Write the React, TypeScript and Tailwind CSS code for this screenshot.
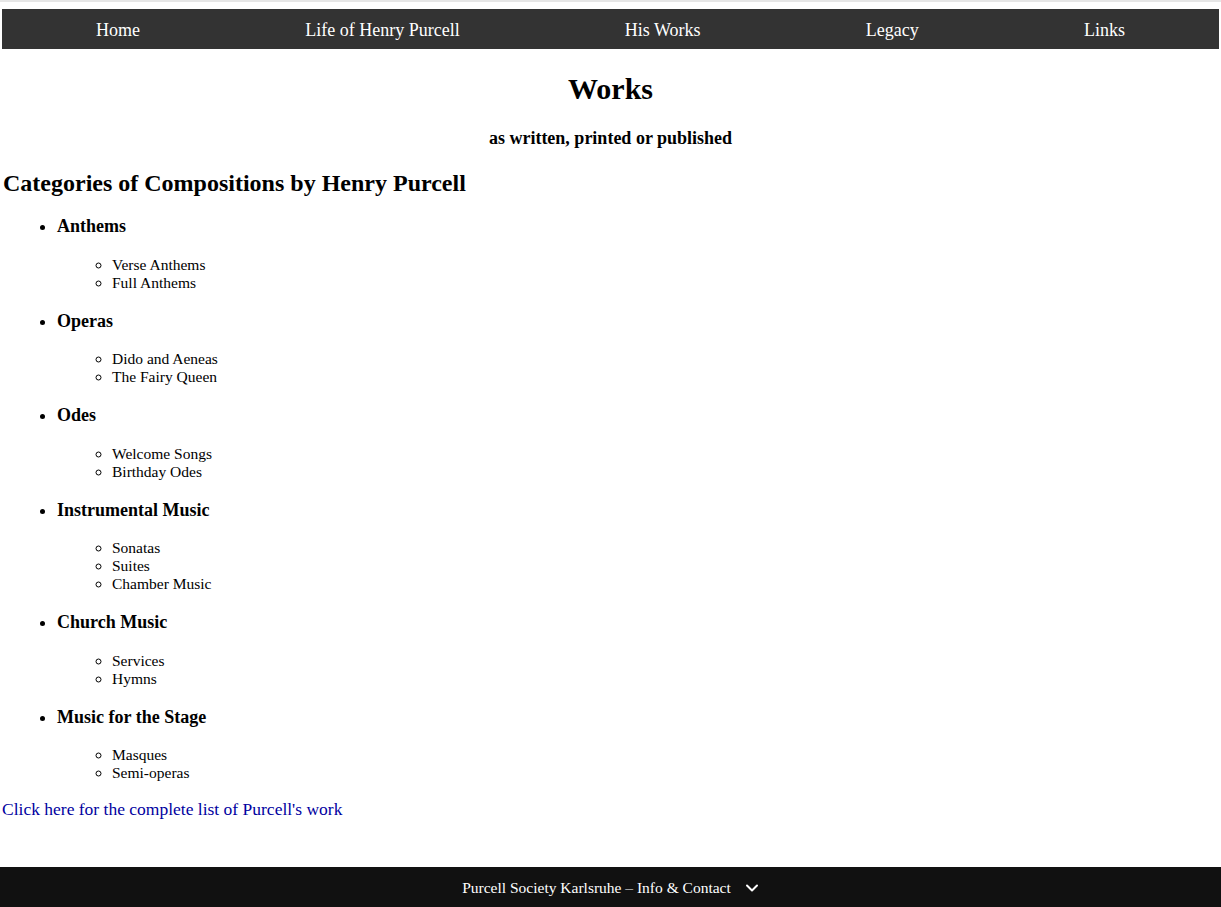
import React from "react"

const navItems = ["Home", "Life of Henry Purcell", "His Works", "Legacy", "Links"]

const categories = [
  { title: "Anthems", items: ["Verse Anthems", "Full Anthems"] },
  { title: "Operas", items: ["Dido and Aeneas", "The Fairy Queen"] },
  { title: "Odes", items: ["Welcome Songs", "Birthday Odes"] },
  { title: "Instrumental Music", items: ["Sonatas", "Suites", "Chamber Music"] },
  { title: "Church Music", items: ["Services", "Hymns"] },
  { title: "Music for the Stage", items: ["Masques", "Semi-operas"] },
]

const App = () => {
  return (
    <div className="min-h-screen flex flex-col bg-white text-black font-['Liberation_Serif',serif]">
      <div className="h-[2px] w-full bg-[#e6e6e6]"></div>
      <nav className="mx-[2px] mt-[7px] h-[40px] pt-[2px] bg-[#333333] flex items-center justify-between px-[94px]">
        {navItems.map((item) => (
          <a key={item} href="#" className="text-white text-[18px] leading-none">
            {item}
          </a>
        ))}
      </nav>

      <main className="flex-1 px-[2px]">
        <h1 className="text-center font-bold text-[30px] leading-[34px] mt-[23px]">Works</h1>
        <p className="text-center font-bold text-[18px] leading-[21px] mt-[22px]">
          as written, printed or published
        </p>
        <h2 className="font-bold text-[24px] leading-[28px] mt-[20px] ml-[1px]">
          Categories of Compositions by Henry Purcell
        </h2>

        <ul className="list-disc pl-[55px] mt-[1px]">
          {categories.map((cat) => (
            <li key={cat.title} className="text-[18px] leading-[22.5px]">
              <h3 className="font-bold text-[18px] leading-[22.5px] my-[18px]">{cat.title}</h3>
              <ul className="list-[circle] pl-[55px] text-[15.5px] leading-[18px]">
                {cat.items.map((sub) => (
                  <li key={sub}>{sub}</li>
                ))}
              </ul>
            </li>
          ))}
        </ul>

        <a href="#" className="block mt-[17px] text-[17.5px] leading-[20px] text-[#0000a0]">
          Click here for the complete list of Purcell's work
        </a>
      </main>

      <footer className="mt-[47px] h-[40px] pt-[2px] bg-[#111111] flex items-center justify-center gap-[14px] text-white text-[15.5px]">
        <span>Purcell Society Karlsruhe – Info &amp; Contact</span>
        <svg width="14" height="10" viewBox="0 0 14 10" fill="none" stroke="white" strokeWidth="2" strokeLinecap="round" strokeLinejoin="round">
          <path d="M2 2.5 L7 7.5 L12 2.5" />
        </svg>
      </footer>
    </div>
  )
}

export default App
